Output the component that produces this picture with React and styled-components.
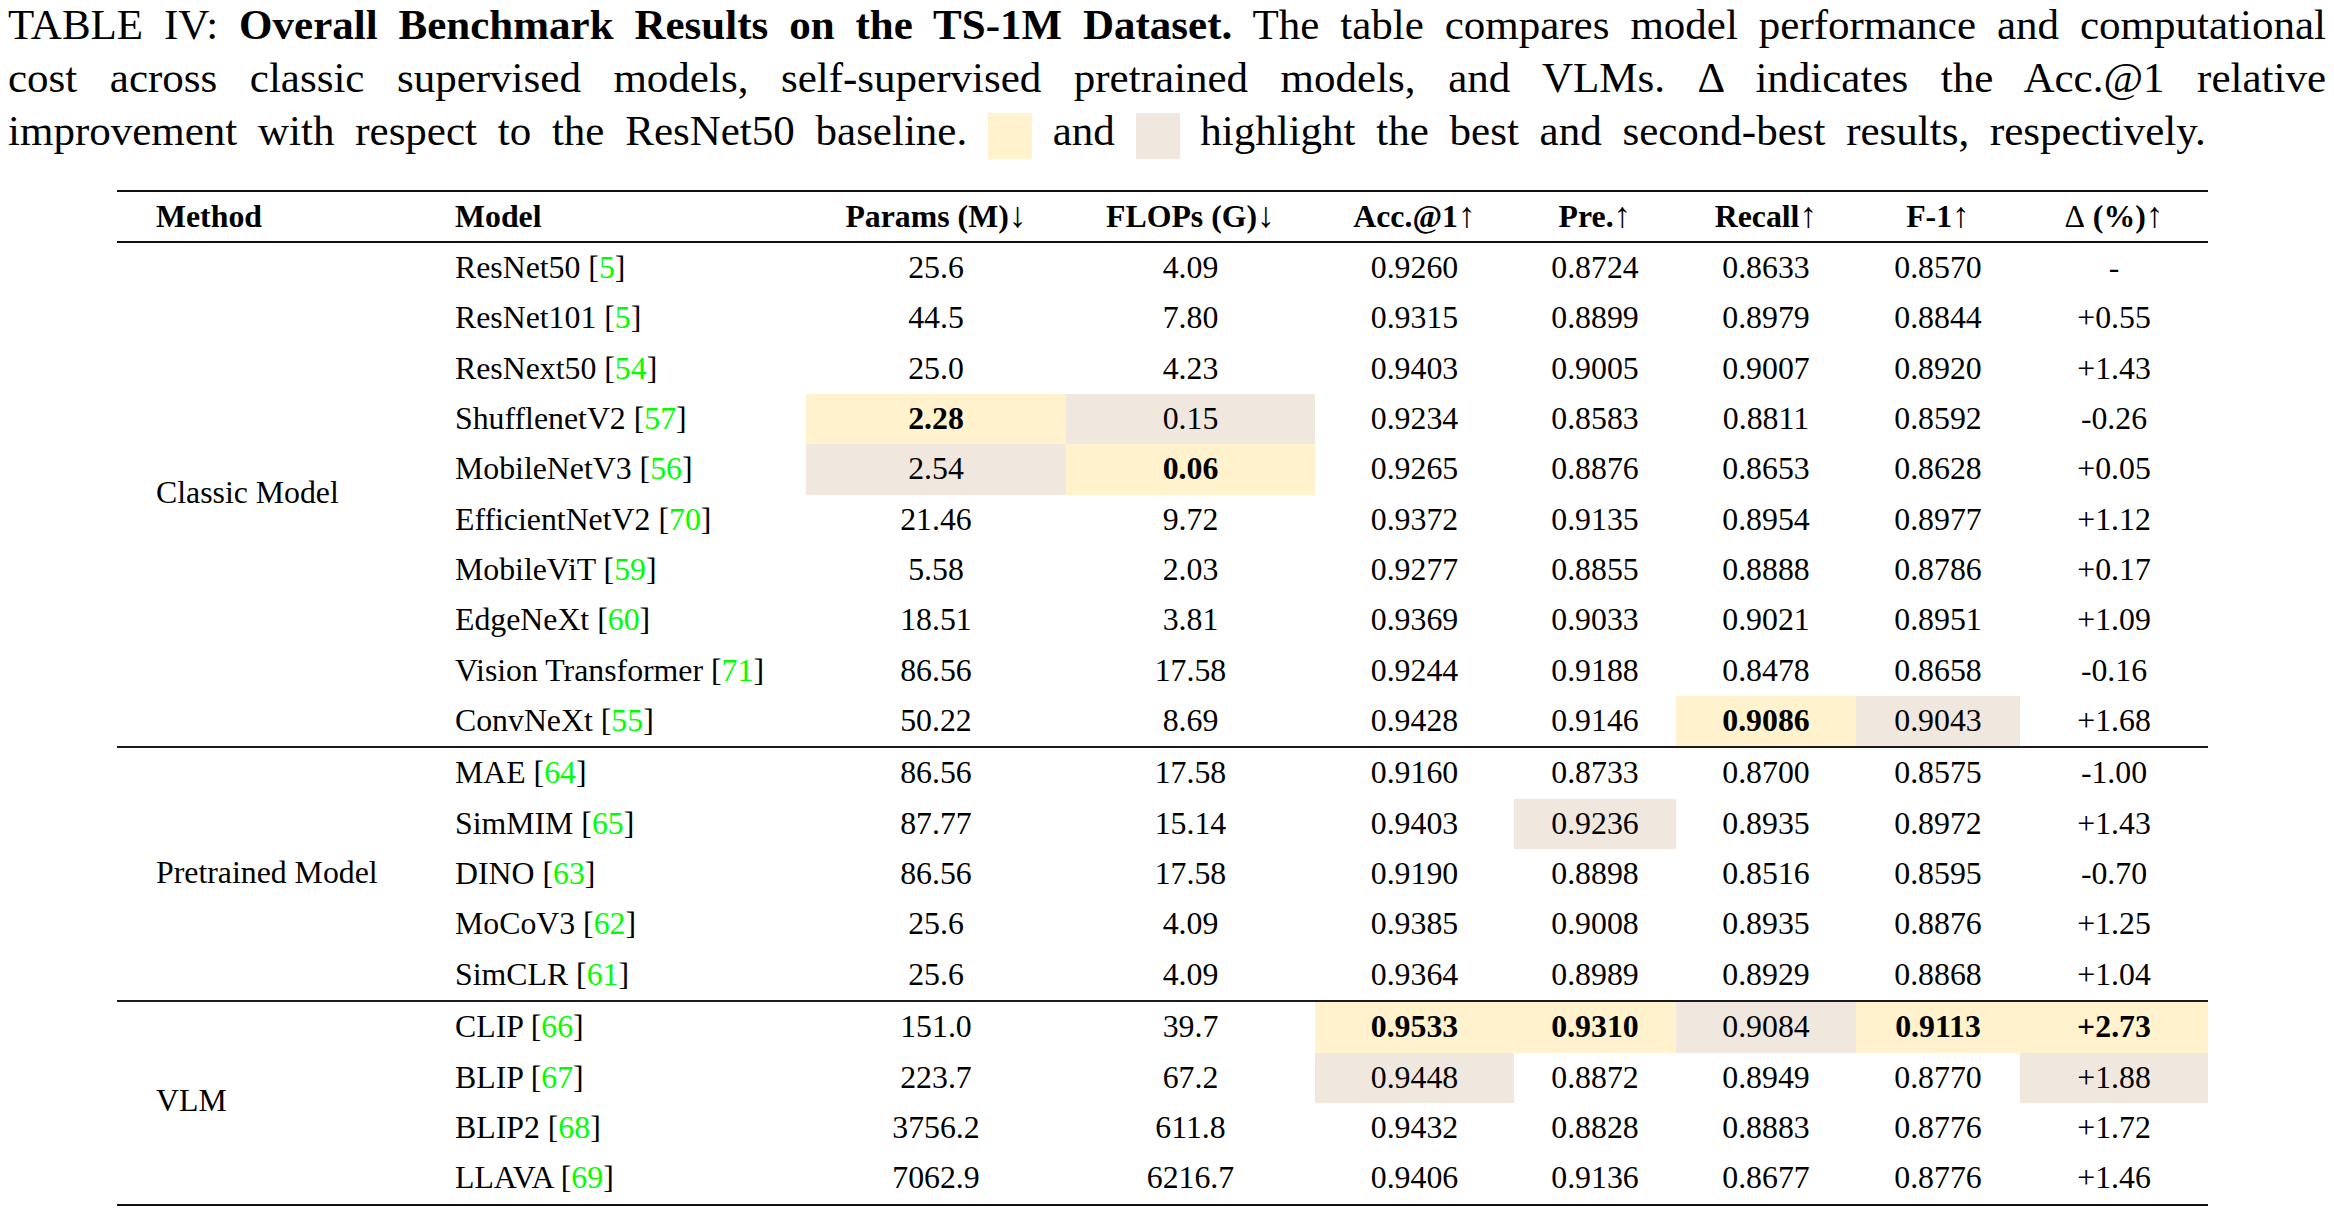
import React from "react";
import styled, { createGlobalStyle } from "styled-components";

const BEST = "#FFF2CC";
const SECOND = "#F0E7DF";
const COLS = "390px 260px 249px 199px 162px 180px 164px 188px";

const GlobalStyle = createGlobalStyle`
  html, body { margin: 0; padding: 0; background: #fff; }
  body {
    font-family: "Liberation Serif", "Times New Roman", serif;
    color: #000;
  }
`;

const Page = styled.div`
  width: 2334px;
  padding-bottom: 4px;
`;

const Caption = styled.div`
  margin-top: -2px;
  padding: 0 8px;
  font-size: 43px;
  line-height: 53px;
`;

const CaptionLine = styled.div`
  text-align: ${(p) => (p.$last ? "left" : "justify")};
  text-align-last: ${(p) => (p.$last ? "left" : "justify")};
  word-spacing: ${(p) => p.$spacing || "0px"};
`;

const Swatch = styled.span`
  display: inline-block;
  width: 44px;
  height: 46px;
  vertical-align: -14px;
  margin: 0;
  background: ${(p) => p.$color};
`;

const MathSym = styled.span`
  font-weight: normal;
`;

const Table = styled.div`
  margin: 31px 0 0 117px;
  width: 2091px;
  border-top: 2px solid #111;
  border-bottom: 2px solid #111;
  font-size: 31.8px;
`;

const HeaderRow = styled.div`
  display: grid;
  grid-template-columns: 299px ${COLS};
  height: 49px;
  line-height: 49px;
  font-weight: bold;
  border-bottom: 2px solid #111;
`;

const HeadCell = styled.div`
  white-space: nowrap;
  text-align: ${(p) => (p.$left ? "left" : "center")};
  padding-left: ${(p) => (p.$left ? "39px" : "0")};
`;

const Arrow = styled.span`
  font-weight: normal;
  font-size: 1.12em;
  line-height: 0;
`;

const Group = styled.div`
  display: flex;
  border-top: ${(p) => (p.$divided ? "2px solid #1a1a1a" : "none")};
`;

const MethodCell = styled.div`
  flex: none;
  width: 299px;
  box-sizing: border-box;
  padding-left: 39px;
  padding-bottom: 3px;
  display: flex;
  align-items: center;
  white-space: nowrap;
`;

const Rows = styled.div`
  flex: 1;
  display: flex;
  flex-direction: column;
`;

const Row = styled.div`
  display: grid;
  grid-template-columns: ${COLS};
  height: 50.35px;
  line-height: 50.35px;
`;

const ModelCell = styled.div`
  padding-left: 39px;
  white-space: nowrap;
`;

const Cell = styled.div`
  text-align: center;
  white-space: nowrap;
  background: ${(p) =>
    p.$hl === "best" ? BEST : p.$hl === "second" ? SECOND : "transparent"};
  font-weight: ${(p) => (p.$hl === "best" ? "bold" : "normal")};
`;

const CiteNum = styled.span`
  color: #00ff00;
`;

const groups = [
  {
    name: "Classic Model",
    rows: [
      ["ResNet50", "5", "25.6", "4.09", "0.9260", "0.8724", "0.8633", "0.8570", "-"],
      ["ResNet101", "5", "44.5", "7.80", "0.9315", "0.8899", "0.8979", "0.8844", "+0.55"],
      ["ResNext50", "54", "25.0", "4.23", "0.9403", "0.9005", "0.9007", "0.8920", "+1.43"],
      ["ShufflenetV2", "57", "2.28", "0.15", "0.9234", "0.8583", "0.8811", "0.8592", "-0.26", { 0: "best", 1: "second" }],
      ["MobileNetV3", "56", "2.54", "0.06", "0.9265", "0.8876", "0.8653", "0.8628", "+0.05", { 0: "second", 1: "best" }],
      ["EfficientNetV2", "70", "21.46", "9.72", "0.9372", "0.9135", "0.8954", "0.8977", "+1.12"],
      ["MobileViT", "59", "5.58", "2.03", "0.9277", "0.8855", "0.8888", "0.8786", "+0.17"],
      ["EdgeNeXt", "60", "18.51", "3.81", "0.9369", "0.9033", "0.9021", "0.8951", "+1.09"],
      ["Vision Transformer", "71", "86.56", "17.58", "0.9244", "0.9188", "0.8478", "0.8658", "-0.16"],
      ["ConvNeXt", "55", "50.22", "8.69", "0.9428", "0.9146", "0.9086", "0.9043", "+1.68", { 4: "best", 5: "second" }],
    ],
  },
  {
    name: "Pretrained Model",
    rows: [
      ["MAE", "64", "86.56", "17.58", "0.9160", "0.8733", "0.8700", "0.8575", "-1.00"],
      ["SimMIM", "65", "87.77", "15.14", "0.9403", "0.9236", "0.8935", "0.8972", "+1.43", { 3: "second" }],
      ["DINO", "63", "86.56", "17.58", "0.9190", "0.8898", "0.8516", "0.8595", "-0.70"],
      ["MoCoV3", "62", "25.6", "4.09", "0.9385", "0.9008", "0.8935", "0.8876", "+1.25"],
      ["SimCLR", "61", "25.6", "4.09", "0.9364", "0.8989", "0.8929", "0.8868", "+1.04"],
    ],
  },
  {
    name: "VLM",
    rows: [
      ["CLIP", "66", "151.0", "39.7", "0.9533", "0.9310", "0.9084", "0.9113", "+2.73", { 2: "best", 3: "best", 4: "second", 5: "best", 6: "best" }],
      ["BLIP", "67", "223.7", "67.2", "0.9448", "0.8872", "0.8949", "0.8770", "+1.88", { 2: "second", 6: "second" }],
      ["BLIP2", "68", "3756.2", "611.8", "0.9432", "0.8828", "0.8883", "0.8776", "+1.72"],
      ["LLAVA", "69", "7062.9", "6216.7", "0.9406", "0.9136", "0.8677", "0.8776", "+1.46"],
    ],
  },
];

const headers = [
  ["Params (M)", "↓"],
  ["FLOPs (G)", "↓"],
  ["Acc.@1", "↑"],
  ["Pre.", "↑"],
  ["Recall", "↑"],
  ["F-1", "↑"],
  [<><MathSym>Δ</MathSym> (%)</>, "↑", "delta"],
];

export default function App() {
  return (
    <Page>
      <GlobalStyle />
      <Caption>
        <CaptionLine>
          TABLE IV: <b>Overall Benchmark Results on the TS-1M Dataset.</b> The table compares model performance and computational
        </CaptionLine>
        <CaptionLine>
          cost across classic supervised models, self-supervised pretrained models, and VLMs. Δ indicates the Acc.@1 relative
        </CaptionLine>
        <CaptionLine $last $spacing="10px">
          improvement with respect to the ResNet50 baseline. <Swatch $color={BEST} /> and <Swatch $color={SECOND} /> highlight the best and second-best results, respectively.
        </CaptionLine>
      </Caption>

      <Table>
        <HeaderRow>
          <HeadCell $left>Method</HeadCell>
          <HeadCell $left>Model</HeadCell>
          {headers.map(([t, a, k]) => (
            <HeadCell key={k || t}>
              {t}
              <Arrow>{a}</Arrow>
            </HeadCell>
          ))}
        </HeaderRow>

        {groups.map((g, gi) => (
          <Group key={g.name} $divided={gi > 0}>
            <MethodCell>{g.name}</MethodCell>
            <Rows>
              {g.rows.map((r) => {
                const [model, cite, ...rest] = r;
                const hl = typeof rest[rest.length - 1] === "object" ? rest.pop() : {};
                return (
                  <Row key={model}>
                    <ModelCell>
                      {model} [<CiteNum>{cite}</CiteNum>]
                    </ModelCell>
                    {rest.map((v, i) => (
                      <Cell key={i} $hl={hl[i]}>
                        {v}
                      </Cell>
                    ))}
                  </Row>
                );
              })}
            </Rows>
          </Group>
        ))}
      </Table>
    </Page>
  );
}
